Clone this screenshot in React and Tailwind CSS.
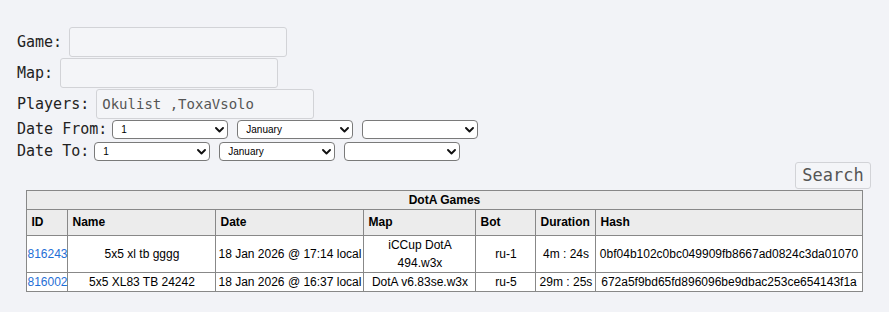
import React from "react";

const mono = { fontFamily: "'DejaVu Sans Mono', monospace" };

function Chevron() {
  return (
    <svg
      className="pointer-events-none absolute right-[4px] top-[7px]"
      width="9"
      height="6"
      viewBox="0 0 9 6"
      fill="none"
    >
      <path d="M1 1 L4.5 4.5 L8 1" stroke="#111" strokeWidth="1.9" strokeLinecap="round" strokeLinejoin="round" />
    </svg>
  );
}

function Sel({ value, options }) {
  return (
    <div className="relative h-[19px] w-[116px]">
      <select
        defaultValue={value}
        className="block h-[19px] w-full appearance-none rounded-[4px] border border-[#7a7a7a] bg-white pl-[8px] text-[10px] leading-[17px] text-black outline-none"
        style={{ fontFamily: "'Liberation Sans', Arial, sans-serif" }}
      >
        {options.map((o) => (
          <option key={o} value={o}>
            {o}
          </option>
        ))}
      </select>
      <Chevron />
    </div>
  );
}

function Field({ label, value }) {
  return (
    <div className="flex h-[30px] items-center">
      <span className="mr-[7px] text-[15px] leading-[19px] text-[#222]" style={mono}>
        {label}
      </span>
      <input
        defaultValue={value}
        className="h-[30px] w-[218px] rounded-[3px] border border-[#d2d3d7] bg-[#f4f5f8] px-[5px] text-[14px] text-[#555] outline-none"
        style={mono}
      />
    </div>
  );
}

function DateRow({ label }) {
  return (
    <div className="flex h-[19px] items-center">
      <span className="mr-[5px] text-[15px] leading-[19px] text-[#222]" style={mono}>
        {label}
      </span>
      <div className="flex gap-[9px]">
        <Sel value="1" options={["1", "2", "3"]} />
        <Sel value="January" options={["January", "February", "March"]} />
        <Sel value="" options={[""]} />
      </div>
    </div>
  );
}

const rows = [
  {
    id: "816243",
    name: "5x5 xl tb gggg",
    date: "18 Jan 2026 @ 17:14 local",
    map: "iCCup DotA 494.w3x",
    bot: "ru-1",
    dur: "4m : 24s",
    hash: "0bf04b102c0bc049909fb8667ad0824c3da01070",
  },
  {
    id: "816002",
    name: "5x5 XL83 TB 24242",
    date: "18 Jan 2026 @ 16:37 local",
    map: "DotA v6.83se.w3x",
    bot: "ru-5",
    dur: "29m : 25s",
    hash: "672a5f9bd65fd896096be9dbac253ce654143f1a",
  },
];

export default function App() {
  const th = "border border-[#888] bg-[#ececec] pl-[4px] py-[4px] text-left font-bold leading-[17px]";
  const td = "border border-[#888] bg-white px-[1px] py-0 text-center leading-[18px]";
  return (
    <div className="min-h-screen w-full bg-[#f2f3f7] pt-[27px]">
      <div className="flex flex-col pl-[17px]">
        <Field label="Game:" value="" />
        <div className="mt-[1px]">
          <Field label="Map:" value="" />
        </div>
        <div className="mt-[1px]">
          <Field label="Players:" value="Okulist ,ToxaVsolo" />
        </div>
        <div className="mt-[1px]">
          <DateRow label="Date From:" />
        </div>
        <div className="mt-[3px]">
          <DateRow label="Date To:" />
        </div>
      </div>
      <div className="mt-[1px] flex justify-end pr-[18px]">
        <button
          className="h-[27px] w-[76px] rounded-[3px] border border-[#d2d3d7] bg-[#f4f5f8] text-[17px] leading-[25px] text-[#555]"
          style={mono}
        >
          Search
        </button>
      </div>
      <table
        className="mx-auto mt-[1px] w-[835px] table-fixed border-collapse text-[12px] text-black"
        style={{ fontFamily: "'Liberation Sans', Arial, sans-serif" }}
      >
        <colgroup>
          <col className="w-[41px]" />
          <col className="w-[148px]" />
          <col className="w-[148px]" />
          <col className="w-[112px]" />
          <col className="w-[60px]" />
          <col className="w-[60px]" />
          <col className="w-[266px]" />
        </colgroup>
        <thead>
          <tr>
            <th colSpan={7} className="border border-[#888] bg-[#ececec] p-0 text-center font-bold leading-[18px]">
              DotA Games
            </th>
          </tr>
          <tr>
            <th className={th}>ID</th>
            <th className={th}>Name</th>
            <th className={th}>Date</th>
            <th className={th}>Map</th>
            <th className={th}>Bot</th>
            <th className={th}>Duration</th>
            <th className={th}>Hash</th>
          </tr>
        </thead>
        <tbody>
          {rows.map((r) => (
            <tr key={r.id}>
              <td className="border border-[#888] bg-white px-0 py-0 text-left leading-[18px]">
                <a href="#" className="text-[#1f6fd6]">
                  {r.id}
                </a>
              </td>
              <td className={td}>{r.name}</td>
              <td className={td}>{r.date}</td>
              <td className={td}>{r.map}</td>
              <td className={td}>{r.bot}</td>
              <td className={td}>{r.dur}</td>
              <td className={td}>{r.hash}</td>
            </tr>
          ))}
        </tbody>
      </table>
    </div>
  );
}
